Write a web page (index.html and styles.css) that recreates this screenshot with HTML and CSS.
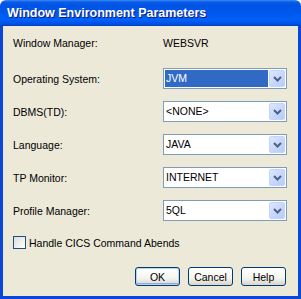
FILE: index.html
```html
<!DOCTYPE html>
<html lang="en">

<head>
  <meta charset="UTF-8" />
  <title>Window Environment Parameters</title>
  <link rel="stylesheet" href="styles.css">
</head>

<body>

  <div class="okno">
    <div class="titulok">Window Environment Parameters</div>

    <div class="telo">
      <div class="riadok prvy">
        <span class="popis">Window Manager:</span>
        <span class="hodnota">WEBSVR</span>
      </div>

      <div class="riadok">
        <span class="popis">Operating System:</span>
        <div class="combo">
          <span class="text vybrane">JVM</span>
          <span class="sipka"><svg width="9" height="6" viewBox="0 0 9 6"><path d="M1 1 L4.5 4.5 L8 1" fill="none" stroke="#4d6185" stroke-width="2"/></svg></span>
        </div>
      </div>

      <div class="riadok">
        <span class="popis">DBMS(TD):</span>
        <div class="combo">
          <span class="text">&lt;NONE&gt;</span>
          <span class="sipka"><svg width="9" height="6" viewBox="0 0 9 6"><path d="M1 1 L4.5 4.5 L8 1" fill="none" stroke="#4d6185" stroke-width="2"/></svg></span>
        </div>
      </div>

      <div class="riadok">
        <span class="popis">Language:</span>
        <div class="combo">
          <span class="text">JAVA</span>
          <span class="sipka"><svg width="9" height="6" viewBox="0 0 9 6"><path d="M1 1 L4.5 4.5 L8 1" fill="none" stroke="#4d6185" stroke-width="2"/></svg></span>
        </div>
      </div>

      <div class="riadok">
        <span class="popis">TP Monitor:</span>
        <div class="combo">
          <span class="text">INTERNET</span>
          <span class="sipka"><svg width="9" height="6" viewBox="0 0 9 6"><path d="M1 1 L4.5 4.5 L8 1" fill="none" stroke="#4d6185" stroke-width="2"/></svg></span>
        </div>
      </div>

      <div class="riadok">
        <span class="popis">Profile Manager:</span>
        <div class="combo">
          <span class="text">5QL</span>
          <span class="sipka"><svg width="9" height="6" viewBox="0 0 9 6"><path d="M1 1 L4.5 4.5 L8 1" fill="none" stroke="#4d6185" stroke-width="2"/></svg></span>
        </div>
      </div>

      <label class="volba">
        <span class="zaskrt"></span>
        Handle CICS Command Abends
      </label>

      <div class="tlacidla">
        <button class="tlac predvolene">OK</button>
        <button class="tlac">Cancel</button>
        <button class="tlac">Help</button>
      </div>
    </div>
  </div>

</body>

</html>
```

FILE: styles.css
```css
body {
  margin: 0;
  font-family: "Liberation Sans", Arial, sans-serif;
  font-size: 10.5px;
  color: #000;
}

.okno {
  width: 301px;
  height: 299px;
  display: flex;
  flex-direction: column;
}

.titulok {
  height: 26px;
  flex: none;
  box-sizing: border-box;
  padding-left: 7px;
  line-height: 27px;
  font-size: 12.5px;
  font-weight: bold;
  color: #fff;
  text-shadow: 1px 1px 0 #0a1883;
  border-radius: 6px 6px 0 0;
  background: linear-gradient(#3c8cf8 0, #0a5ce8 2px, #0054e3 5px, #0058ee 13px, #0060f8 20px, #0050e0 24px, #003dc8 26px);
}

.telo {
  flex: 1;
  background: #ece9d8;
  border: 3px solid #0a47d8;
  border-top: 0;
  padding: 6px 11px 0 10px;
}

.riadok {
  display: flex;
  align-items: center;
  height: 21px;
  margin-top: 12px;
}

.riadok.prvy {
  margin-top: 0;
  margin-bottom: 15px;
}

.popis {
  width: 150px;
  flex: none;
}

.combo {
  width: 124px;
  height: 21px;
  box-sizing: border-box;
  border: 1px solid #7f9db9;
  background: #fff;
  display: flex;
  align-items: stretch;
  padding: 1px;
  gap: 1px;
}

.text {
  flex: 1;
  line-height: 17px;
  padding-left: 1px;
}

.vybrane {
  background: #316ac5;
  color: #fff;
}

.sipka {
  width: 16px;
  box-sizing: border-box;
  border: 1px solid #c3d3fd;
  border-radius: 2px;
  background: linear-gradient(135deg, #dce6fe, #b6cbf8);
  display: flex;
  align-items: center;
  justify-content: center;
}

.volba {
  display: flex;
  align-items: center;
  gap: 3px;
  height: 21px;
  margin-top: 11px;
}

.zaskrt {
  width: 13px;
  height: 13px;
  box-sizing: border-box;
  border: 1px solid #1c5180;
  background: linear-gradient(135deg, #dcdcd7, #fff);
}

.tlacidla {
  display: flex;
  justify-content: flex-end;
  gap: 8px;
  margin-top: 14px;
  margin-right: 1px;
}

.tlac {
  width: 45px;
  height: 19px;
  padding: 0;
  font-family: "Liberation Sans", Arial, sans-serif;
  font-size: 10.5px;
  color: #000;
  border: 1px solid #003c74;
  border-radius: 3px;
  background: linear-gradient(#fff, #f4f4f0 60%, #d8d4c8);
}

.predvolene {
  box-shadow: inset 0 0 0 1px #b9d1ea, inset 0 -1px 0 1px #89ade4;
}
```
